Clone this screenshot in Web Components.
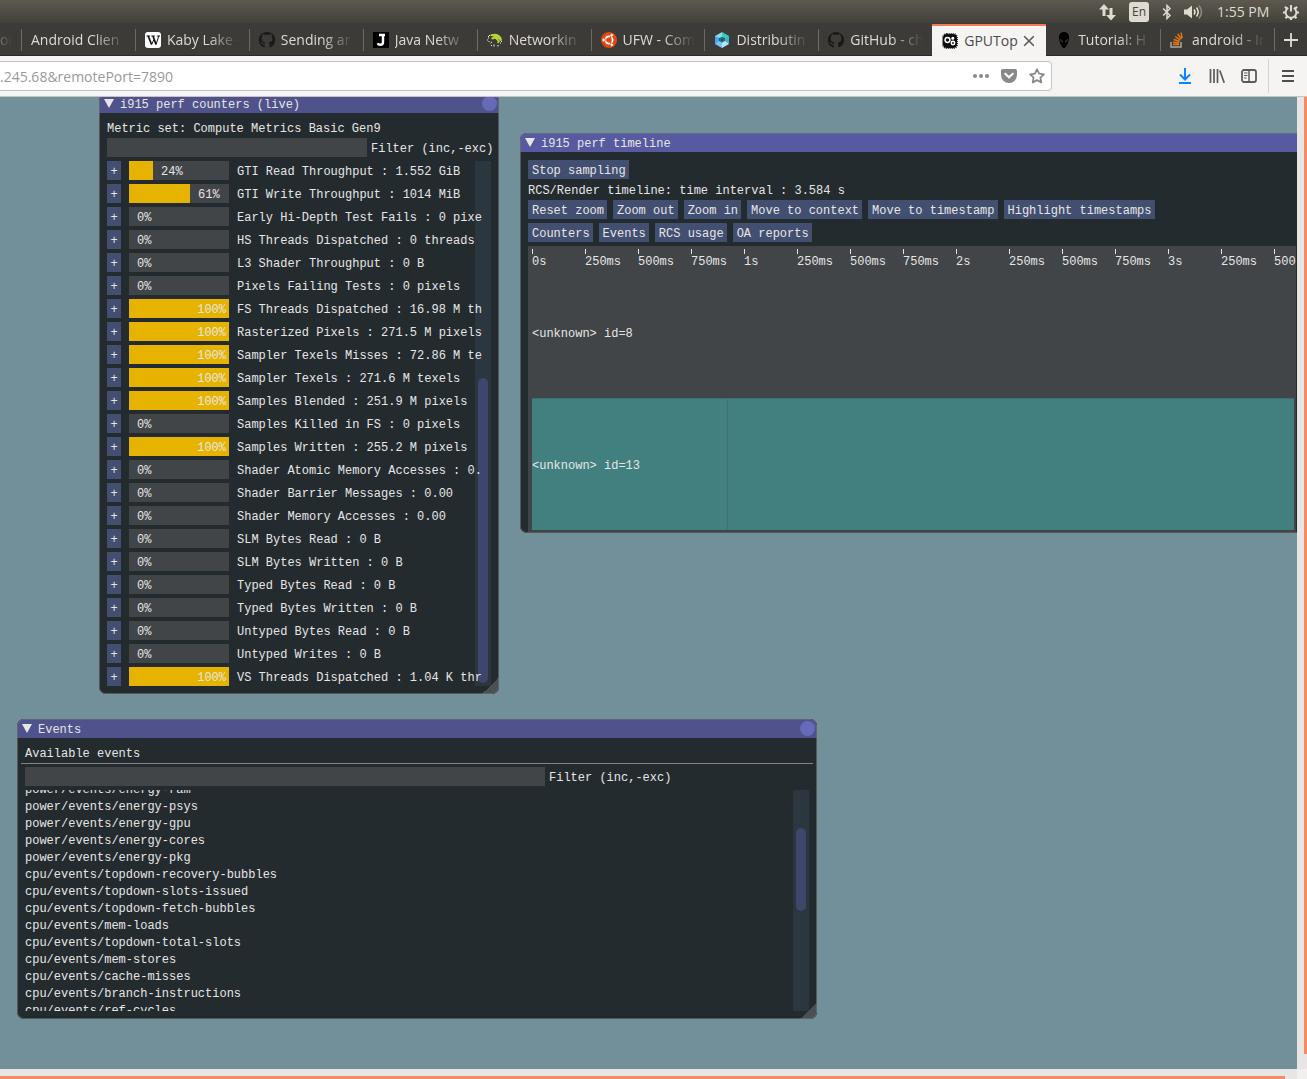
<!DOCTYPE html>
<html lang="en">
<head>
<meta charset="utf-8">
<title>GPUTop</title>
<style>
html,body{margin:0;height:100%}
body{font-family:"Open Sans","Noto Sans",sans-serif;font-size:14px;overflow:hidden}
</style>
</head>
<body>
<gputop-desktop></gputop-desktop>
<script>
const ICONS = {
  net:'<g fill="#dfdbd2"><path d="M5 0L0 5.500h3.500V12h3V5.500H10z"/><path d="M12 16.500L17 11h-3.500V4h-3v7H7z"/></g>',
  bt:'<path d="M1.200 4.500l6.800 7L5 14.500v-13L8 4.500l-6.800 7" fill="none" stroke="#dfdbd2" stroke-width="1.500"/>',
  sound:'<path d="M0 5.500h3L8 1.500v13l-5-4H0z" fill="#dfdbd2"/><path d="M10 5.500q2 2.500 0 5M12.500 3.500q3.500 4.500 0 9" fill="none" stroke="#dfdbd2" stroke-width="1.600"/><path d="M15 1.500q5 6.500 0 13" fill="none" stroke="#8b8980" stroke-width="1.600"/>',
  gear:'<g fill="none" stroke="#dfdbd2"><path d="M5.200 3.800a5.400 5.400 0 1 0 5.600 0" stroke-width="2"/><path d="M8 1v6.500" stroke-width="2"/><path d="M0 8.500h2.500M13.500 8.500H16M8 14v2M2 2.700l2 2M14 2.700l-2 2M2.500 14.200l1.800-1.800M13.500 14.200l-1.800-1.800" stroke-width="2.200"/></g>',
  wiki:'<rect width="16" height="16" rx="3" fill="#fff"/><g fill="none" stroke="#111"><path d="M3.200 4l3.400 8.500M8 4l3 8.500" stroke-width="1.700"/><path d="M6.600 12.500L9 7.500M11 12.500L13.800 4M1.500 4h3.500M6.300 4h3.500M11.800 4H15" stroke-width="1"/></g>',
  github:'<path fill="#1b1a19" fill-rule="evenodd" d="M8 0a8 8 0 0 0-3 15.500c.5.1.7-.2.7-.5v-2.200c-2.300.4-2.800-.7-3.200-1.500-.2-.5-.7-.9-1-1.100 1.100-.4 1.800.4 2.300 1.100.5.800 1.300.7 2 .4.1-.6.400-1 .6-1.200C3.500 10 2.600 8.500 2.600 6.700c0-.9.3-1.700.9-2.300-.2-.6-.3-1.400.1-2.300.9 0 1.800.6 2.300 1 1.400-.4 2.800-.4 4.200 0 .6-.4 1.400-1 2.300-1 .4.900.3 1.700.1 2.300.6.6.9 1.400.9 2.300 0 2-1 3.500-3.700 3.800.5.5.7 1 .7 1.900V15c0 .3.2.6.6.5A8 8 0 0 0 8 0z"/>',
  j:'<rect width="16" height="16" fill="#000"/><path d="M6 3h6M10 3v7q0 2.800-2.700 2.800-2 0-2.700-1.500" fill="none" stroke="#fff" stroke-width="2.400"/>',
  lizard:'<path d="M3.500 2.500Q8 .8 11 2.500q4 2 4 6l-2 .5q-.5-2-2-2.500l2 3-2 2-1-1 .8-1.200-2.500-2.500L5 7.500 4 6l3-1.500-3.500-.5z" fill="#b5d334"/><path d="M1 6h1M0 8h1M1.500 9.500h1M3.500 11l1.500-1M4 13.500h1M7 14.500v-2M11 13v1.500M14 11.500l-1-.8M14.500 9v1M2 3.500h1M1 4.500h1" stroke="#eee" stroke-width="1"/>',
  ubuntu:'<circle cx="8" cy="8" r="8" fill="#dd4814"/><circle cx="8" cy="8" r="3.600" fill="none" stroke="#fff" stroke-width="1.700"/><path d="M8 8L2.800 8M8 8l3.500-6M8 8l3.500 6" stroke="#dd4814" stroke-width="1"/><g fill="#fff" stroke="#dd4814" stroke-width=".7"><circle cx="2.700" cy="8" r="1.700"/><circle cx="10.700" cy="3.300" r="1.700"/><circle cx="10.700" cy="12.700" r="1.700"/></g>',
  hex:'<path d="M8 0L1 4v4l7-3z" fill="#84d9e8"/><path d="M8 0l7 4v4L8 5z" fill="#35cfc0"/><path d="M1 4v8l4-2V6z" fill="#4aa3ee"/><path d="M15 4v8l-4-2V6z" fill="#3ab7c9"/><path d="M1 12l7 4v-6l-3-1z" fill="#75c8f5"/><path d="M15 12l-7 4v-6l3-1z" fill="#b9e3fb"/><path d="M8 5l3 3-3 3-3-3z" fill="#2b8296"/><path d="M8 6.500L9.500 8 8 9.500 6.500 8z" fill="#24404a"/>',
  gputop:'<rect x="1" y="1" width="14" height="14" rx="4" fill="#0c0c0c"/><rect x=".7" y=".7" width="14.600" height="14.600" rx="4" fill="none" stroke="#222" stroke-width="1.400" stroke-dasharray="1 1"/><g fill="none" stroke="#fff" stroke-width="1.500"><circle cx="5.500" cy="7" r="2.400"/><circle cx="11" cy="10" r="1.700"/><circle cx="10.800" cy="5.300" r=".8"/></g>',
  alien:'<path d="M8 0C4.500 0 2.800 2.500 3 6c.2 4 2.800 10 5 10s4.800-6 5-10c.2-3.500-1.500-6-5-6z" fill="#000"/><path d="M4 7q3 .5 3 3.500-2.500 0-3-3.500zM12 7q-3 .5-3 3.500 2.500 0 3-3.500z" fill="#35332f"/>',
  stack:'<path d="M1 10v5h10v-5" fill="none" stroke="#a9a9a9" stroke-width="1.500"/><g stroke="#e8770e" stroke-width="1.500"><path d="M3 12.500h6M3 10.200l6.100.8M3.700 7.500l5.800 2M5.300 4.500l5 3.600M7.700 2l3.700 5M11 .7l1.200 5.500"/></g>',
  close:'<path d="M3.200 3.200l9.600 9.600M12.800 3.200l-9.600 9.600" stroke="#5b5a57" stroke-width="1.600"/>',
  plus:'<path d="M8 1v14M1 8h14" stroke="#dfdbd2" stroke-width="1.800"/>',
  dots:'<g fill="#8a8988"><circle cx="2" cy="8" r="2"/><circle cx="8" cy="8" r="2"/><circle cx="14" cy="8" r="2"/></g>',
  pocket:'<path d="M1.500 1h13A1.500 1.500 0 0 1 16 2.500V7A8 8 0 0 1 0 7V2.500A1.500 1.500 0 0 1 1.500 1z" fill="#8a8988"/><path d="M4.200 5.700L8 9.300l3.800-3.600" fill="none" stroke="#fff" stroke-width="2" stroke-linecap="round"/>',
  star:'<path d="M8 1.300l2.100 4.400 4.800.6-3.500 3.300.9 4.800L8 12.100l-4.300 2.300.9-4.800L1.100 6.300l4.800-.6z" fill="none" stroke="#8a8988" stroke-width="1.800" stroke-linejoin="round"/>',
  down:'<path d="M8 0v11M3 6.500l5 5 5-5M2 15h12" fill="none" stroke="#0a84ff" stroke-width="2"/>',
  library:'<path d="M1.500 1v14M5 1v14M8.500 1v14M10.800 2.500l4.400 12.300" stroke="#5b5a58" stroke-width="1.700"/>',
  sidebar:'<rect x="1" y="2" width="14" height="12" rx="2" fill="none" stroke="#5b5a58" stroke-width="1.800"/><path d="M8 2v12" stroke="#5b5a58" stroke-width="1.500"/><path d="M3 5h3.500M3 7.500h3.500M3 10h2.500" stroke="#5b5a58" stroke-width="1"/>',
  menu:'<path d="M2 3h12M2 8h12M2 13h12" stroke="#4f4e4c" stroke-width="2"/>'
};
function define(tag, render) {
  customElements.define(tag, class extends HTMLElement {
    connectedCallback() {
      if (this.shadowRoot) return;
      this.attachShadow({mode: 'open'}).innerHTML = render(this);
    }
  });
}
const RESET = '*{box-sizing:border-box}button,input{font:inherit;color:inherit;border:0;border-radius:0;padding:0;margin:0;outline:0}';

define('ui-icon', el => {
  const w = el.getAttribute('w') || 16;
  return `<style>:host{display:block;flex:none;width:${w}px;height:16px}svg{display:block;overflow:visible}</style>
  <svg width="${w}" height="16" viewBox="0 0 ${w} 16" aria-hidden="true">${ICONS[el.getAttribute('name')]}</svg>`;
});

define('system-panel', () => `<style>${RESET}
:host{display:flex;height:23px;align-items:center;justify-content:flex-end;gap:13px;padding-right:8px;color:#dfdbd2;background:linear-gradient(#5d594f,#42413b);font-size:14px}
.lang{width:20px;height:20px;border-radius:3px;background:#dfdbd2;color:#45443e;font-size:12px;line-height:20px;text-align:center}
time{width:53px;white-space:nowrap;line-height:22px}
</style><ui-icon name="net" w="17"></ui-icon><span class="lang">En</span><ui-icon name="bt" w="9"></ui-icon><ui-icon name="sound" w="20"></ui-icon><time>1:55 PM</time><ui-icon name="gear"></ui-icon>`);

define('browser-tab', el => {
  const icon = el.getAttribute('icon'), active = el.hasAttribute('active');
  return `<style>${RESET}
:host{display:flex;flex:1 1 0;min-width:0;color:#dfdbd2}
:host([cut]){flex:0 0 21px}
button{display:flex;flex:1;min-width:0;align-items:center;gap:6px;padding:0 9px 0 10px;background:none;text-align:left;position:relative}
button::before{content:"";position:absolute;left:0;top:5px;bottom:4px;width:1px;background:#6b6963}
:host([cut]) button{padding:0 9px 0 0}
:host([cut]) button::before,:host([active]) button::before,:host([bare]) button::before{display:none}
:host([active]) button{background:#f5f4f2;color:#4c4b49;border-top:2px solid #f37b50;padding:0 9px 0 10px;margin-bottom:-1px}
span{flex:1;min-width:0;overflow:hidden;white-space:nowrap;line-height:20px}
:host([active]) span{overflow:visible}
:host(:not([active])) span{-webkit-mask-image:linear-gradient(90deg,#000 calc(100% - 32px),transparent);mask-image:linear-gradient(90deg,#000 calc(100% - 32px),transparent)}
</style><button role="tab" aria-selected="${active}">${icon ? `<ui-icon name="${icon}"></ui-icon>` : ''}<span><slot></slot></span>${active ? '<ui-icon name="close"></ui-icon>' : ''}</button>`;
});

define('tab-strip', () => `<style>${RESET}
:host{display:flex;height:33px;padding-top:1px;background:#3c3b37;border-bottom:1px solid #2b2a28}
.new{flex:0 0 33px;padding-left:9px;background:none;position:relative}
.new::before{content:"";position:absolute;left:0;top:4px;bottom:4px;width:1px;background:#6b6963}
</style>
<browser-tab cut>or</browser-tab>
<browser-tab>Android Clien</browser-tab>
<browser-tab icon="wiki">Kaby Lake -</browser-tab>
<browser-tab icon="github">Sending ar</browser-tab>
<browser-tab icon="j">Java Netw</browser-tab>
<browser-tab icon="lizard">Networkin</browser-tab>
<browser-tab icon="ubuntu">UFW - Com</browser-tab>
<browser-tab icon="hex">Distributin</browser-tab>
<browser-tab icon="github">GitHub - ch</browser-tab>
<browser-tab icon="gputop" active>GPUTop</browser-tab>
<browser-tab icon="alien" bare>Tutorial: H</browser-tab>
<browser-tab icon="stack">android - In</browser-tab>
<button class="new" aria-label="New tab"><ui-icon name="plus"></ui-icon></button>`);

define('browser-toolbar', () => `<style>${RESET}
:host{display:flex;height:41px;align-items:center;background:#f5f4f2;border-bottom:1px solid #c6c3c0;padding-right:11px}
.url{display:flex;flex:1;height:30px;align-items:center;gap:12px;padding-right:6px;margin-right:125px;background:#fff;border:1px solid #c4c2c0;border-left:0;border-radius:0 4px 4px 0}
input{flex:1;min-width:0;background:none;color:#999;height:26px}
button{background:none}
.tools{display:flex;gap:16px}
.menu{margin-left:11px;padding-left:11px;height:34px;border-left:1px solid #d5d3d0}
</style>
<div class="url"><input aria-label="Address" value=".245.68&amp;remotePort=7890"><button aria-label="Page actions"><ui-icon name="dots"></ui-icon></button><button aria-label="Save to Pocket"><ui-icon name="pocket"></ui-icon></button><button aria-label="Bookmark"><ui-icon name="star"></ui-icon></button></div>
<div class="tools"><button aria-label="Downloads"><ui-icon name="down"></ui-icon></button><button aria-label="Library"><ui-icon name="library"></ui-icon></button><button aria-label="Sidebars"><ui-icon name="sidebar"></ui-icon></button></div>
<button class="menu" aria-label="Menu"><ui-icon name="menu"></ui-icon></button>`);

define('im-window', el => `<style>${RESET}
:host{position:absolute;display:flex;flex-direction:column;background:#242b2e;border-radius:7px;overflow:hidden;color:#e6e6e6;font:12px/16px "Liberation Mono",monospace}
:host::after{content:"";position:absolute;inset:0;border:1px solid rgba(112,112,112,.65);border-radius:7px;pointer-events:none}
header{display:flex;flex:none;height:19px;align-items:center;gap:6px;padding:0 2px 0 5px;background:#4f528b}
:host([focused]) header{background:#575aa0}
header svg{display:block}
h2{flex:1;margin:0;padding-top:3px;font:inherit;white-space:pre}
.x{width:15px;height:15px;border-radius:50%;background:#6769b9}
.body{flex:1;min-height:0;display:flex;flex-direction:column;gap:4px;padding:8px}
:host([focused]) .body{padding-bottom:1px}
.grip{position:absolute;right:0;bottom:0;width:17px;height:17px;background:linear-gradient(135deg,transparent 50%,#4c5052 50%)}
</style>
<header><svg width="10" height="10" viewBox="0 0 10 10"><path d="M0 0h10L5 9z" fill="#e6e6e6"/></svg><h2>${el.getAttribute('heading')}</h2>${el.hasAttribute('focused') ? '' : '<button class="x" aria-label="Close"></button>'}</header>
<div class="body"><slot></slot></div>${el.hasAttribute('focused') ? '' : '<div class="grip"></div>'}`);

define('im-text', () => `<style>:host{display:block;flex:none;height:13px;white-space:pre}</style><slot></slot>`);

define('im-filter', () => `<style>${RESET}
:host{display:flex;flex:none;gap:4px;height:19px}
input{flex:none;width:var(--field);height:19px;background:#414547;padding:0 4px}
label{white-space:pre;padding-top:3px}
</style><input id="f" type="text"><label for="f">Filter (inc,-exc)</label>`);

define('im-scroll', el => `<style>${RESET}
:host{display:flex;flex:1;min-height:0}
.view{flex:1;min-width:0;overflow:hidden}
:host([spill]) .view{overflow:visible;position:relative;z-index:1}
.track{flex:none;width:16px;display:flex;flex-direction:column;padding:3px;background:#2b363f}
.track::before{content:"";flex:${el.getAttribute('before')}}
.thumb{flex:${el.getAttribute('size')};border-radius:5px;background:#3f456b}
.track::after{content:"";flex:${el.getAttribute('after')}}
</style><div class="view"><slot></slot></div><div class="track"><div class="thumb"></div></div>`);

define('im-button', () => `<style>${RESET}
:host{display:block;flex:none}
button{display:block;height:19px;padding:3px 3px 0 4px;background:#434f70;white-space:pre;line-height:16px}
</style><button><slot></slot></button>`);

define('counter-row', el => {
  const v = +el.getAttribute('value');
  return `<style>${RESET}
:host{display:flex;height:19px;gap:8px;margin-bottom:4px}
button{flex:none;width:14px;padding-top:3px;background:#434f70;text-align:center;line-height:16px}
.bar{display:flex;flex:none;width:100px;padding-top:3px;background:linear-gradient(#e6b300,#e6b300) 0 0/${v}% 100% no-repeat #414547}
.bar span{${v > 80 ? 'margin-left:auto;padding-right:3px' : `padding-left:calc(${v}% + 8px)`}}
.name{flex:1;min-width:0;padding-top:3px;white-space:pre}
</style><button aria-label="Expand">+</button><div class="bar"><span>${v}%</span></div><div class="name"><slot></slot></div>`;
});

const COUNTERS = [[24,'GTI Read Throughput : 1.552 GiB'],[61,'GTI Write Throughput : 1014 MiB'],[0,'Early Hi-Depth Test Fails : 0 pixe'],[0,'HS Threads Dispatched : 0 threads'],[0,'L3 Shader Throughput : 0 B'],[0,'Pixels Failing Tests : 0 pixels'],[100,'FS Threads Dispatched : 16.98 M th'],[100,'Rasterized Pixels : 271.5 M pixels'],[100,'Sampler Texels Misses : 72.86 M te'],[100,'Sampler Texels : 271.6 M texels'],[100,'Samples Blended : 251.9 M pixels'],[0,'Samples Killed in FS : 0 pixels'],[100,'Samples Written : 255.2 M pixels'],[0,'Shader Atomic Memory Accesses : 0.'],[0,'Shader Barrier Messages : 0.00'],[0,'Shader Memory Accesses : 0.00'],[0,'SLM Bytes Read : 0 B'],[0,'SLM Bytes Written : 0 B'],[0,'Typed Bytes Read : 0 B'],[0,'Typed Bytes Written : 0 B'],[0,'Untyped Bytes Read : 0 B'],[0,'Untyped Writes : 0 B'],[100,'VS Threads Dispatched : 1.04 K thr']];

define('perf-counters', () => `<style>:host{display:contents}im-filter{--field:260px}</style>
<im-text>Metric set: Compute Metrics Basic Gen9</im-text><im-filter></im-filter>
<im-scroll spill before="214" size="305" after="0">${COUNTERS.map(c => `<counter-row value="${c[0]}">${c[1]}</counter-row>`).join('')}</im-scroll>`);

const EVENTS = ['power/events/energy-ram','power/events/energy-psys','power/events/energy-gpu','power/events/energy-cores','power/events/energy-pkg','cpu/events/topdown-recovery-bubbles','cpu/events/topdown-slots-issued','cpu/events/topdown-fetch-bubbles','cpu/events/mem-loads','cpu/events/topdown-total-slots','cpu/events/mem-stores','cpu/events/cache-misses','cpu/events/branch-instructions','cpu/events/ref-cycles'];

define('event-list', () => `<style>:host{display:contents}im-filter{--field:520px;margin-top:-1px}
hr{margin:0 -4px;border:0;height:1px;flex:none;background:#858386}
ul{list-style:none;margin:-8px 0 0;padding:0;line-height:17px}
</style><im-text>Available events</im-text><hr><im-filter></im-filter>
<im-scroll before="35" size="83" after="97"><ul>${EVENTS.map(e => `<li>${e}</li>`).join('')}</ul></im-scroll>`);

const TICKS = ['0s','250ms','500ms','750ms','1s','250ms','500ms','750ms','2s','250ms','500ms','750ms','3s','250ms','500'];
const buttons = a => a.map(b => `<im-button>${b}</im-button>`).join('');

define('perf-timeline', () => `<style>${RESET}
:host{display:contents}
.row{display:flex;gap:6px}
.chart{flex:1;display:flex;flex-direction:column;min-height:0;background:#414547;padding:3px 2px 2px 4px;overflow:hidden}
.ruler{display:flex;height:18px;flex:none;margin-right:-2px}
.ruler span{flex:0 0 53px;white-space:pre}
.ruler span:last-child{flex-shrink:1;min-width:0}
.ruler span::before{content:"";display:block;width:1px;height:5px;background:#e6e6e6}
.lane{flex:1;display:flex;align-items:center;padding-top:2px}
.busy{background:linear-gradient(90deg,#387472,#387472) 195px 0/1px 100% no-repeat #428080;border-top:1px solid #3b6f70}
</style>
<div class="row">${buttons(['Stop sampling'])}</div>
<im-text>RCS/Render timeline: time interval : 3.584 s</im-text>
<div class="row">${buttons(['Reset zoom','Zoom out','Zoom in','Move to context','Move to timestamp','Highlight timestamps'])}</div>
<div class="row">${buttons(['Counters','Events','RCS usage','OA reports'])}</div>
<div class="chart"><div class="ruler">${TICKS.map(t => `<span>${t}</span>`).join('')}</div>
<div class="lane">&lt;unknown&gt; id=8</div><div class="lane busy">&lt;unknown&gt; id=13</div></div>`);

define('gputop-desktop', () => `<style>${RESET}
:host{display:flex;flex-direction:column;height:100vh}
main{flex:1;min-height:0;display:grid;grid-template:minmax(0,1fr) 10px/minmax(0,1fr) 10px;background:#f2f0ee}
.canvas{position:relative;overflow:hidden;background:#72909a}
.v,.h{background:#e7e6e5;display:flex}
.v{padding:0 0 15px 7px}.h{padding:7px 12px 0 0}
.v i,.h i{flex:1;background:#f28c66}
.counters{left:99px;top:-3px;width:400px;height:600px}
.timeline{left:520px;top:36px;width:784px;height:400px}
.events{left:17px;top:622px;width:800px;height:300px}
</style>
<system-panel></system-panel><tab-strip></tab-strip><browser-toolbar></browser-toolbar>
<main><div class="canvas">
<im-window class="counters" heading="i915 perf counters (live)"><perf-counters></perf-counters></im-window>
<im-window class="timeline" focused heading="i915 perf timeline"><perf-timeline></perf-timeline></im-window>
<im-window class="events" heading="Events"><event-list></event-list></im-window>
</div><div class="v"><i></i></div><div class="h"><i></i></div></main>`);
</script>
</body>
</html>
